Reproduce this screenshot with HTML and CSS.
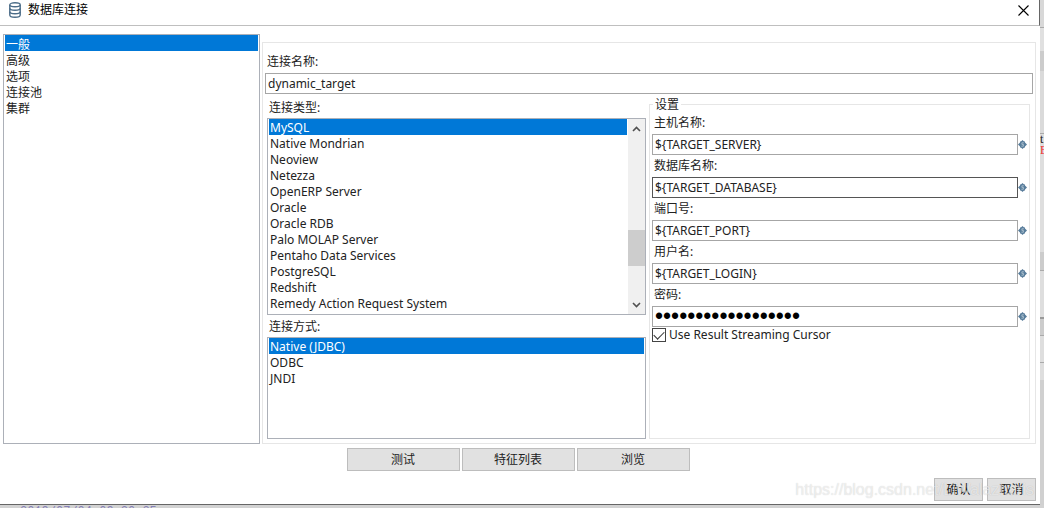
FILE: index.html
```html
<!DOCTYPE html>
<html lang="zh-CN">
<head>
<meta charset="utf-8">
<title>数据库连接</title>
<link rel="stylesheet" href="styles.css">
</head>
<body>
<svg class="defs" width="0" height="0" aria-hidden="true">
  <symbol id="var" viewBox="0 0 9 9">
    <path d="M4.500 0 9 4.500 4.500 9 0 4.500Z" fill="#587d9b"/>
    <path d="M2 1.500h5v6h-5z" fill="#587d9b"/>
    <path d="M5.800 2.800H3.900v1.600h1.500v1.800H3.400" fill="none" stroke="#b9cbd8" stroke-width=".8"/>
  </symbol>
</svg>
<div class="desktop">
  <main class="dialog">
    <header class="titlebar">
      <svg class="db" viewBox="0 0 12 16" aria-hidden="true">
        <g fill="#fff" stroke="#4b6c88" stroke-width="1.400">
          <path d="M.8 3v10c0 1.200 2.200 2.200 5.200 2.200s5.200-1 5.200-2.200V3"/>
          <ellipse cx="6" cy="2.800" rx="5.200" ry="2"/>
          <path d="M.8 6.300c0 1.200 2.200 2 5.200 2s5.200-.8 5.200-2M.8 9.700c0 1.200 2.200 2 5.200 2s5.200-.8 5.200-2" fill="none"/>
        </g>
      </svg>
      <h1>数据库连接</h1>
      <button class="close" aria-label="关闭"><svg viewBox="0 0 11 11" width="11" height="11"><path d="M.5.5l10 10M10.500.5l-10 10" stroke="#000" stroke-width="1.100"/></svg></button>
    </header>
    <div class="content">
      <select class="list nav" size="5" aria-label="分类">
        <option selected>一般</option><option>高级</option><option>选项</option><option>连接池</option><option>集群</option>
      </select>
      <section class="panel">
        <label class="name-label" for="name">连接名称:</label>
        <input class="text" id="name" value="dynamic_target">
        <div class="columns">
          <div class="left">
            <label for="type">连接类型:</label>
            <div class="scrollbox">
              <select class="list" id="type" size="12">
                <option selected>MySQL</option><option>Native Mondrian</option><option>Neoview</option><option>Netezza</option><option>OpenERP Server</option><option>Oracle</option><option>Oracle RDB</option><option>Palo MOLAP Server</option><option>Pentaho Data Services</option><option>PostgreSQL</option><option>Redshift</option><option>Remedy Action Request System</option>
              </select>
              <div class="scrollbar" aria-hidden="true">
                <svg viewBox="0 0 9 6"><path d="M1 5l3.500-3.500L8 5"/></svg>
                <div class="track"><div class="thumb"></div></div>
                <svg viewBox="0 0 9 6"><path d="M1 1l3.500 3.500L8 1"/></svg>
              </div>
            </div>
            <label for="access">连接方式:</label>
            <select class="list access" id="access" size="4">
              <option selected>Native (JDBC)</option><option>ODBC</option><option>JNDI</option>
            </select>
          </div>
          <fieldset class="settings">
            <legend>设置</legend>
            <label for="host">主机名称:</label>
            <div class="field"><input class="text" id="host" value="${TARGET_SERVER}"><svg><use href="#var"/></svg></div>
            <label for="database">数据库名称:</label>
            <div class="field"><input class="text active" id="database" value="${TARGET_DATABASE}"><svg><use href="#var"/></svg></div>
            <label for="port">端口号:</label>
            <div class="field"><input class="text" id="port" value="${TARGET_PORT}"><svg><use href="#var"/></svg></div>
            <label for="user">用户名:</label>
            <div class="field"><input class="text" id="user" value="${TARGET_LOGIN}"><svg><use href="#var"/></svg></div>
            <label for="pass">密码:</label>
            <div class="field"><input class="text password" type="password" id="pass" value="${TARGET_PASSWORD}"><svg><use href="#var"/></svg></div>
            <label class="check"><input type="checkbox" checked>Use Result Streaming Cursor</label>
          </fieldset>
        </div>
      </section>
    </div>
    <div class="actions"><button>测试</button><button>特征列表</button><button>浏览</button></div>
    <footer class="footer"><button>确认</button><button>取消</button><span class="watermark">https://blog.csdn.net/LiWalazharis</span></footer>
  </main>
  <div class="behind-right" aria-hidden="true"><span class="mark">t</span><span class="error">E</span></div>
  <div class="behind-bottom" aria-hidden="true"><span class="stamp">2019/07/04 09:30:35</span></div>
</div>
</body>
</html>
```
FILE: styles.css
```css
* { box-sizing: border-box; }
body {
  margin: 0;
  font: 12px/16px "Noto Sans", "Noto Sans CJK SC", sans-serif;
  color: #222;
}
.defs { position: absolute; }
.desktop {
  display: grid;
  grid-template-columns: 1fr 4px;
  grid-template-rows: 1fr 3px;
  height: 100vh;
  background: #d2d2d2;
}
.dialog {
  display: flex;
  flex-direction: column;
  min-width: 0;
  background: #fff;
  border-bottom: 1px solid #666;
}
input, select, button { font: inherit; color: inherit; border-radius: 0; margin: 0; }
.titlebar {
  display: flex;
  align-items: center;
  height: 26px;
  padding: 0 10px 5px 9px;
  border-bottom: 1px solid #bfbfbf;
  border-right: 1px solid #666;
}
.db { width: 12px; height: 16px; }
h1 { margin: 0 0 0 7px; font-size: 12px; font-weight: 400; color: #000; }
.close { display: flex; margin-left: auto; padding: 0; border: 0; background: none; }
.content { display: flex; flex: 1; min-height: 0; padding: 8px 4px 4px 3px; gap: 2px; }
.list {
  display: block;
  border: 1px solid #acb0b8;
  outline: 0;
  padding: 0 1px;
  background: #fff;
  overflow: hidden;
}
.list option { height: 16px; min-height: 16px; line-height: 16px; padding: 0 1px; }
.list option:checked {
  background: linear-gradient(#0078d7, #0078d7);
  -webkit-text-fill-color: #fff;
}
.nav { width: 257px; flex: none; }
.panel {
  display: flex;
  flex-direction: column;
  flex: 1;
  min-width: 0;
  margin-top: 8px;
  padding: 11px 2px 3px;
  border: 1px solid #e6e6e6;
}
.text {
  display: block;
  width: 100%;
  height: 21px;
  padding: 0 2px 1px;
  border: 1px solid #a6a6a6;
  outline: 0;
  background: #fff;
}
.active { border-color: #555; }
.name-label { padding: 0 0 3px 2px; }
.columns { display: flex; flex: 1; gap: 3px; min-height: 0; padding: 3px 3px 1px 2px; }
.left { display: flex; flex-direction: column; flex: 1; min-width: 0; }
.left label { padding: 3px 0 2px 2px; }
.scrollbox { display: flex; height: 197px; border: 1px solid #acb0b8; }
.scrollbox .list { flex: 1; min-width: 0; border: 0; }
.scrollbar { display: flex; flex-direction: column; width: 17px; padding: 7px 0 6px; align-items: center; background: #f0f0f0; }
.scrollbar svg { width: 9px; height: 6px; fill: none; stroke: #505050; stroke-width: 1.6; }
.track { flex: 1; width: 100%; padding-top: 98px; }
.thumb { height: 36px; background: #cdcdcd; }
.left .scrollbox + label { padding: 4px 0 2px 2px; }
.access { flex: 1; width: 100%; min-height: 0; }
.settings {
  flex: 0 0 381px;
  min-width: 0;
  margin: 0;
  padding: 0 2px;
  border: 1px solid #e6e6e6;
}
legend { height: 15px; padding: 0 2px; margin-left: 1px; }
.settings label { display: block; height: 22px; padding: 3px 0 0 2px; }
.field { display: flex; align-items: center; }
.field .text { flex: 1; min-width: 0; }
.field svg { width: 9px; height: 9px; flex: none; }
.field .password { font-family: "Liberation Sans", sans-serif; font-size: 23px; color: #000; }
.settings .check { display: flex; align-items: center; gap: 3px; height: 15px; padding: 0; }
.check input {
  appearance: none;
  width: 14px;
  height: 14px;
  border: 1px solid #444;
  display: grid;
  place-items: center;
}
.check input:checked::before {
  content: "";
  width: 9px;
  height: 5px;
  border: solid #333;
  border-width: 0 0 1px 1px;
  transform: translateY(-1px) rotate(-45deg);
}
.actions { display: flex; justify-content: center; gap: 2px; height: 30px; padding-right: 4px; }
.actions button, .footer button { height: 23px; padding: 0; border: 1px solid #bdbdbd; background: #e1e1e1; }
.actions button { width: 113px; }
.footer { position: relative; display: flex; justify-content: flex-end; gap: 4px; height: 26px; padding-right: 4px; }
.footer button { width: 49px; }
.watermark {
  position: absolute;
  right: 6px;
  top: 3px;
  font: 16px/18px "Liberation Sans", sans-serif;
  color: rgba(255, 255, 255, .6);
  text-shadow: 0 0 1px rgba(0, 0, 0, .2);
  pointer-events: none;
}
.behind-right {
  display: flex;
  flex-direction: column;
  min-width: 0;
  padding-top: 134px;
  overflow: hidden;
  font: 12px/11px "Liberation Serif", serif;
  background: linear-gradient(#d8d8d8 27px, #aaa 27px 28px, #e0e0e0 28px 51px, #ccc 51px 71px, #dadada 71px 133px, #aaa 133px 134px, #dedede 134px 252px, #ccc 252px 270px, #aaa 270px 271px, #dedede 271px 317px, #999 317px 319px, #ccc 319px 335px, #aaa 335px 336px, #dedede 336px 362px, #aaa 362px 363px, #dedede 363px 380px, #d0d0d0 380px);
}
.error { color: #e33; }
.behind-bottom { grid-column: 1 / -1; min-height: 0; padding-left: 20px; overflow: hidden; }
.stamp { display: block; font: 12px/14px "Liberation Mono", monospace; color: #8882b8; }
```
